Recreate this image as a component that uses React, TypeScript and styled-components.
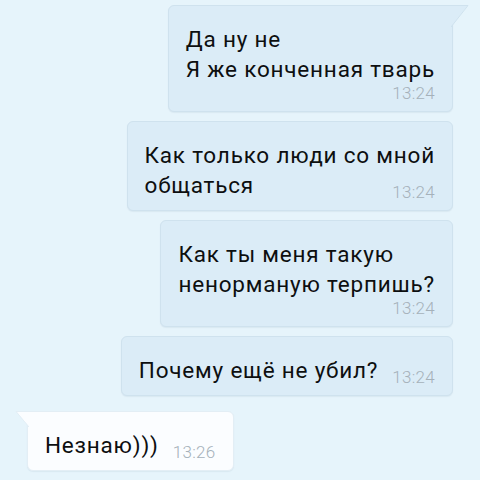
import React from "react";
import styled, { createGlobalStyle } from "styled-components";

const Global = createGlobalStyle`
  html, body { margin: 0; padding: 0; background: #e6f4fb; }
  body { font-family: Roboto, "Noto Sans", sans-serif; }
`;

const Feed = styled.div`
  display: flex;
  flex-direction: column;
  padding: 5px 27px 0 27px;
  width: 480px;
  height: 480px;
  box-sizing: border-box;
  overflow: hidden;
`;

const Row = styled.div<{ $out: boolean; $gapTop: number }>`
  display: flex;
  justify-content: ${(p) => (p.$out ? "flex-end" : "flex-start")};
  margin-top: ${(p) => p.$gapTop}px;
`;

const Bubble = styled.div<{ $out: boolean; $tail: boolean }>`
  position: relative;
  display: flow-root;
  box-sizing: border-box;
  padding: 18px 17px 9px 17px;
  border-radius: 6px;
  ${(p) => (p.$tail ? (p.$out ? "border-top-right-radius: 0;" : "border-top-left-radius: 0;") : "")}
  background: ${(p) => (p.$out ? "#dbecf7" : "#fbfdff")};
  border: 1px solid ${(p) => (p.$out ? "#cfe2ee" : "#e3eef5")};
  box-shadow: 0 1px 1px rgba(120, 150, 170, 0.12);
  color: #0d0f10;
  font-size: 22.5px;
  letter-spacing: 0.8px;
  line-height: 30px;
  white-space: nowrap;
`;

const Time = styled.span<{ $inline: boolean }>`
  font-size: 17px;
  letter-spacing: 0.3px;
  line-height: 18px;
  font-weight: 300;
  color: #a5b1ba;
  ${(p) =>
    p.$inline
      ? "float: right; margin-top: 13px; margin-left: 14px;"
      : "display: block; text-align: right; margin-top: 0;"}
`;

const Tail = styled.svg<{ $out: boolean }>`
  position: absolute;
  top: -1px;
  ${(p) => (p.$out ? "right: -18px;" : "left: -13px;")}
`;

type Msg = { out: boolean; lines: string[]; time: string; inline: boolean; tail?: boolean };

const messages: Msg[] = [
  { out: true, lines: ["Да ну не", "Я же конченная тварь"], time: "13:24", inline: false, tail: true },
  { out: true, lines: ["Как только люди со мной", "общаться"], time: "13:24", inline: true },
  { out: true, lines: ["Как ты меня такую", "ненорманую терпишь?"], time: "13:24", inline: false },
  { out: true, lines: ["Почему ещё не убил?"], time: "13:24", inline: true },
  { out: false, lines: ["Незнаю)))"], time: "13:26", inline: true, tail: true },
];

export default function App() {
  return (
    <>
      <Global />
      <Feed>
        {messages.map((m, i) => {
          const prev = messages[i - 1];
          const gap = i === 0 ? 0 : prev.out === m.out ? 9 : 15;
          return (
            <Row key={i} $out={m.out} $gapTop={gap}>
              <Bubble $out={m.out} $tail={!!m.tail}>
                {m.tail &&
                  (m.out ? (
                    <Tail $out width="19" height="24" viewBox="0 0 19 24">
                      <path d="M0 0 H17 L0 22 Z" fill="#dbecf7" />
                      <path d="M0 0.5 H17 L0 22" fill="none" stroke="#cfe2ee" strokeWidth="1" />
                    </Tail>
                  ) : (
                    <Tail $out={false} width="14" height="18" viewBox="0 0 14 18">
                      <path d="M14 0 H1 L14 16 Z" fill="#fbfdff" />
                      <path d="M14 0.5 H1 L14 16" fill="none" stroke="#e3eef5" strokeWidth="1" />
                    </Tail>
                  ))}
                {m.lines.map((l, j) => (
                  <React.Fragment key={j}>
                    {j > 0 && <br />}
                    {l}
                  </React.Fragment>
                ))}
                <Time $inline={m.inline}>{m.time}</Time>
              </Bubble>
            </Row>
          );
        })}
      </Feed>
    </>
  );
}
